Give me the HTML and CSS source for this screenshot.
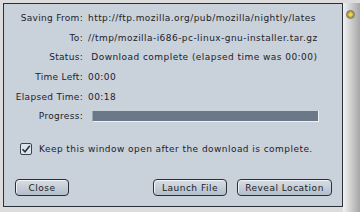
FILE: index.html
```html
<!DOCTYPE html>
<html lang="en">
<head>
    <meta charset="UTF-8">
    <title>Download</title>
    <link rel="stylesheet" href="styles.css">
</head>
<body>
    <div class="window">
        <div class="panel">
            <div class="info">
                <div class="label">Saving From:</div>
                <div class="value">http://ftp.mozilla.org/pub/mozilla/nightly/lates</div>
                <div class="label">To:</div>
                <div class="value">//tmp/mozilla-i686-pc-linux-gnu-installer.tar.gz</div>
                <div class="label">Status:</div>
                <div class="value">&nbsp;Download complete (elapsed time was 00:00)</div>
                <div class="label">Time Left:</div>
                <div class="value">00:00</div>
                <div class="label">Elapsed Time:</div>
                <div class="value">00:18</div>
                <div class="label">Progress:</div>
                <div class="value"><div class="progress"><div class="fill" style="width: 100%"></div></div></div>
            </div>

            <label class="keep">
                <span class="check">
                    <svg width="10" height="10" viewBox="0 0 10 10"><path d="M1.5 5.2 L4 7.8 L8.8 1.8" fill="none" stroke="#2a3340" stroke-width="1.6"/></svg>
                </span>
                Keep this window open after the download is complete.
            </label>

            <div class="buttons">
                <button class="btn close">Close</button>
                <span class="spacer"></span>
                <button class="btn launch">Launch File</button>
                <button class="btn reveal">Reveal Location</button>
            </div>
        </div>
        <div class="side">
            <span class="knob"></span>
        </div>
    </div>
</body>
</html>
```

FILE: styles.css
```css
body {
    margin: 0;
    background: #dcdcdc;
    font-family: "DejaVu Sans", sans-serif;
    font-size: 9px;
    color: #1c222a;
    overflow: hidden;
}

.window {
    display: flex;
    height: 212px;
    padding: 3px 0 0 3px;
    box-sizing: border-box;
}

.panel {
    width: 340px;
    height: 204px;
    box-sizing: border-box;
    border: 1px solid #2b2f36;
    background: #c9d1da;
    display: flex;
    flex-direction: column;
}

.info {
    display: grid;
    grid-template-columns: 79px 1fr;
    column-gap: 5px;
    grid-auto-rows: 19.7px;
    align-items: center;
    padding-top: 4px;
}

.label {
    text-align: right;
    letter-spacing: 0.3px;
}

.value {
    white-space: nowrap;
    overflow: hidden;
    letter-spacing: 0.45px;
}

.progress {
    width: 227px;
    height: 12px;
    box-sizing: border-box;
    margin: -1px 0 0 4px;
    border: 1px solid #9aa5b1;
    border-right-color: #eef2f6;
    border-bottom-color: #eef2f6;
    background: #c9d1da;
}

.fill {
    height: 100%;
    background: #6b7888;
}

.keep {
    display: flex;
    align-items: center;
    gap: 7px;
    margin: 17px 0 0 16px;
    letter-spacing: 0.45px;
}

.check {
    width: 12px;
    height: 12px;
    box-sizing: border-box;
    border: 1px solid #3a4350;
    border-radius: 2px;
    background: #dde3ea;
    display: flex;
    align-items: center;
    justify-content: center;
}

.buttons {
    display: flex;
    align-items: center;
    gap: 10px;
    margin: 24px 10px 0 11px;
}

.spacer {
    flex: 1;
}

.btn {
    font: inherit;
    letter-spacing: 0.5px;
    color: #1c222a;
    height: 17px;
    padding: 0;
    border: 1px solid #2b3038;
    border-radius: 4px;
    background: linear-gradient(#d7dde4, #b4bec9);
    box-shadow: inset 1px 1px 0 #eef2f6;
}

.close {
    width: 54px;
}

.launch {
    width: 74px;
}

.reveal {
    width: 95px;
}

.side {
    flex: 1;
    background: linear-gradient(to right, #f2f2f2, #c4c4c4 60%, #a6a6a6);
    position: relative;
}

.knob {
    position: absolute;
    left: 3px;
    top: 7px;
    width: 9px;
    height: 9px;
    box-sizing: border-box;
    border: 1px solid #6e6e6e;
    border-radius: 50%;
    background: radial-gradient(circle, #f0d23c 35%, #9a8a2a 55%, #b8b8b8 70%);
}
```
